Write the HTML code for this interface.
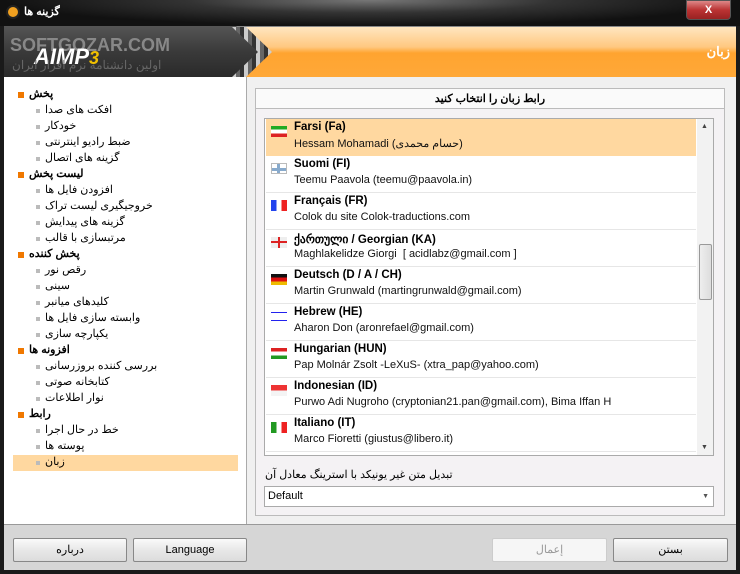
<!DOCTYPE html><html><head><meta charset="utf-8"><style>
*{margin:0;padding:0;box-sizing:border-box}
body{width:740px;height:574px;background:#1a1a1a;font-family:Tahoma,"Liberation Sans","Noto Sans CJK SC",sans-serif;font-size:11px;position:relative;overflow:hidden;color:#000}
.abs{position:absolute}
.title{left:0;top:0;width:740px;height:26px;background:radial-gradient(ellipse at 50% 0%,#777 0%,#333 35%,#111 70%);}
.hdr{left:4px;top:26px;width:732px;height:51px;background:linear-gradient(#ffe6c0,#ffc880 40%,#ffa430 52%,#ffa838);border-top:1px solid #888}
.logo{left:4px;top:26px;width:290px;height:51px;background:linear-gradient(#555,#3a3a3a 50%,#2a2a2a);clip-path:polygon(0 0,232px 0,258px 25px,232px 51px,0 51px)}
.left{left:4px;top:77px;width:243px;height:447px;background:#fff;border-right:1px solid #aaa}
.right{left:247px;top:77px;width:489px;height:447px;background:#f0f0f0}
.bottom{left:4px;top:524px;width:732px;height:46px;background:#d6d6d6;border-top:1px solid #999}
.btn{position:absolute;top:538px;height:24px;border:1px solid #888;border-radius:2px;background:linear-gradient(#fafafa,#e8e8e8 50%,#dcdcdc);text-align:center;line-height:22px;font-size:11px}
.h{position:absolute;left:29px;font-weight:bold;font-size:11px}
.h:before{content:"";position:absolute;left:-11px;top:5px;width:6px;height:6px;background:#f07800}
.i{position:absolute;left:45px;font-size:11px}
.i:before{content:"";position:absolute;left:-9px;top:6px;width:4px;height:4px;background:#bbb}
.row{position:absolute;left:266px;width:430px;height:37px;border-bottom:1px solid #e6e6e6}
.row b{position:absolute;left:28px;top:2px;font-size:11.5px}
.row span{position:absolute;left:28px;top:18px;font-size:11px;color:#111}
.fl{position:absolute;left:5px;top:7px;width:16px;height:11px}
</style></head><body>
<div class="abs title"></div>
<div class="abs" style="left:6px;top:5px;width:14px;height:14px;border-radius:7px;background:#f0a020;border:2px solid #222"></div>
<div class="abs" style="left:24px;top:5px;color:#fff;font-weight:bold;font-size:11px">گزینه ها</div>
<div class="abs" style="left:686px;top:0;width:45px;height:20px;background:linear-gradient(#d88,#b33 50%,#922);border:1px solid #555;border-radius:0 0 4px 4px;color:#fff;text-align:center;font-weight:bold;line-height:18px">X</div>
<div class="abs hdr"></div>
<div class="abs logo"></div>
<div class="abs" style="left:232px;top:27px;width:50px;height:50px;background:repeating-linear-gradient(90deg,#ccc 0 4px,#666 4px 8px,#333 8px 12px);clip-path:polygon(0 0,14px 0,40px 25px,14px 50px,0 50px,26px 25px)"></div>
<div class="abs" style="left:10px;top:35px;color:#888;font-weight:bold;font-size:18px;font-family:'Liberation Sans',sans-serif">SOFTGOZAR.COM</div>
<div class="abs" style="left:34px;top:44px;color:#fff;font-style:italic;font-weight:bold;font-size:22px;font-family:'Liberation Sans',sans-serif">AIMP<span style="color:#f0c000;font-size:18px">3</span></div>
<div class="abs" style="left:12px;top:58px;color:#666;font-size:12px">اولین دانشنامه نرم افزار ایران</div>
<div class="abs" style="right:10px;top:44px;color:#fff;font-weight:bold;font-size:13px">زبان</div>
<div class="abs left"></div>
<div class="abs right"></div>
<div class="h" style="top:87px">پخش</div>
<div class="i" style="top:103px">افکت های صدا</div>
<div class="i" style="top:119px">خودکار</div>
<div class="i" style="top:135px">ضبط رادیو اینترنتی</div>
<div class="i" style="top:151px">گزینه های اتصال</div>
<div class="h" style="top:167px">لیست پخش</div>
<div class="i" style="top:183px">افزودن فایل ها</div>
<div class="i" style="top:199px">خروجیگیری لیست تراک</div>
<div class="i" style="top:215px">گزینه های پیدایش</div>
<div class="i" style="top:231px">مرتبسازی با قالب</div>
<div class="h" style="top:247px">پخش کننده</div>
<div class="i" style="top:263px">رقص نور</div>
<div class="i" style="top:279px">سینی</div>
<div class="i" style="top:295px">کلیدهای میانبر</div>
<div class="i" style="top:311px">وابسته سازی فایل ها</div>
<div class="i" style="top:327px">یکپارچه سازی</div>
<div class="h" style="top:343px">افزونه ها</div>
<div class="i" style="top:359px">بررسی کننده بروزرسانی</div>
<div class="i" style="top:375px">کتابخانه صوتی</div>
<div class="i" style="top:391px">نوار اطلاعات</div>
<div class="h" style="top:407px">رابط</div>
<div class="i" style="top:423px">خط در حال اجرا</div>
<div class="i" style="top:439px">پوسته ها</div>
<div class="abs" style="left:13px;top:455px;width:225px;height:16px;background:#ffd8a0"></div>
<div class="i" style="top:455px">زبان</div>
<div class="abs" style="left:255px;top:88px;width:470px;height:428px;border:1px solid #bbb;background:#f4f2f4"></div>
<div class="abs" style="left:256px;top:89px;width:468px;height:20px;border-bottom:1px solid #bbb;background:#fafafa;text-align:center;font-weight:bold;line-height:20px">رابط زبان را انتخاب کنید</div>
<div class="abs" style="left:264px;top:118px;width:450px;height:338px;border:1px solid #aaa;background:#fff"></div>
<div class="abs" style="left:697px;top:119px;width:16px;height:336px;background:#f2f2f2"></div>
<div class="abs" style="left:699px;top:244px;width:13px;height:56px;border:1px solid #999;border-radius:2px;background:linear-gradient(90deg,#eee,#ddd)"></div>
<div class="abs" style="left:701px;top:123px;font-size:7px;color:#444">▲</div>
<div class="abs" style="left:701px;top:444px;font-size:7px;color:#444">▼</div>
<div class="row" style="top:119px;background:#ffd8a0;border:0"><div class="fl" style="background:linear-gradient(#2a2 0 33%,#fff 33% 66%,#d22 66%)"></div><b>Farsi (Fa)</b><span>Hessam Mohamadi (حسام محمدی)</span></div>
<div class="row" style="top:156px"><div class="fl" style="background:linear-gradient(90deg,transparent 5px,#8ac 5px 8px,transparent 8px),linear-gradient(#fff 4px,#8ac 4px 7px,#fff 7px);border:1px solid #bbb"></div><b>Suomi (FI)</b><span>Teemu Paavola (teemu@paavola.in)</span></div>
<div class="row" style="top:193px"><div class="fl" style="background:linear-gradient(90deg,#24e 33%,#fff 33% 66%,#e22 66%)"></div><b>Français (FR)</b><span>Colok du site Colok-traductions.com</span></div>
<div class="row" style="top:230px"><div class="fl" style="background:linear-gradient(90deg,transparent 7px,#d22 7px 9px,transparent 9px),linear-gradient(#eee 4px,#d22 4px 6px,#eee 6px)"></div><b>ქართული / Georgian (KA)</b><span>Maghlakelidze Giorgi &nbsp;[ acidlabz@gmail.com ]</span></div>
<div class="row" style="top:267px"><div class="fl" style="background:linear-gradient(#111 33%,#d11 33% 66%,#eb0 66%)"></div><b>Deutsch (D / A / CH)</b><span>Martin Grunwald (martingrunwald@gmail.com)</span></div>
<div class="row" style="top:304px"><div class="fl" style="background:linear-gradient(#fff 1px,#22e 1px 2px,#fff 2px 9px,#22e 9px 10px,#fff 10px)"></div><b>Hebrew (HE)</b><span>Aharon Don (aronrefael@gmail.com)</span></div>
<div class="row" style="top:341px"><div class="fl" style="background:linear-gradient(#d22 33%,#fff 33% 66%,#292 66%)"></div><b>Hungarian (HUN)</b><span>Pap Molnár Zsolt -LeXuS- (xtra_pap@yahoo.com)</span></div>
<div class="row" style="top:378px"><div class="fl" style="background:linear-gradient(#e33 50%,#f4f4f4 50%)"></div><b>Indonesian (ID)</b><span>Purwo Adi Nugroho (cryptonian21.pan@gmail.com), Bima Iffan H</span></div>
<div class="row" style="top:415px"><div class="fl" style="background:linear-gradient(90deg,#292 33%,#fff 33% 66%,#e22 66%)"></div><b>Italiano (IT)</b><span>Marco Fioretti (giustus@libero.it)</span></div>
<div class="abs" style="left:265px;top:468px;font-size:11px">تبدیل متن غیر یونیکد با استرینگ معادل آن</div>
<div class="abs" style="left:264px;top:486px;width:450px;height:21px;border:1px solid #aaa;background:#fff;line-height:19px;padding-left:3px">Default<span style="position:absolute;right:4px;font-size:7px;color:#555">▼</span></div>
<div class="abs bottom"></div>
<div class="btn" style="left:13px;width:114px">درباره</div>
<div class="btn" style="left:133px;width:114px">Language</div>
<div class="btn" style="left:492px;width:115px;color:#999;background:#f6f6f6;border-color:#ccc">إعمال</div>
<div class="btn" style="left:613px;width:115px">بستن</div>
</body></html>
